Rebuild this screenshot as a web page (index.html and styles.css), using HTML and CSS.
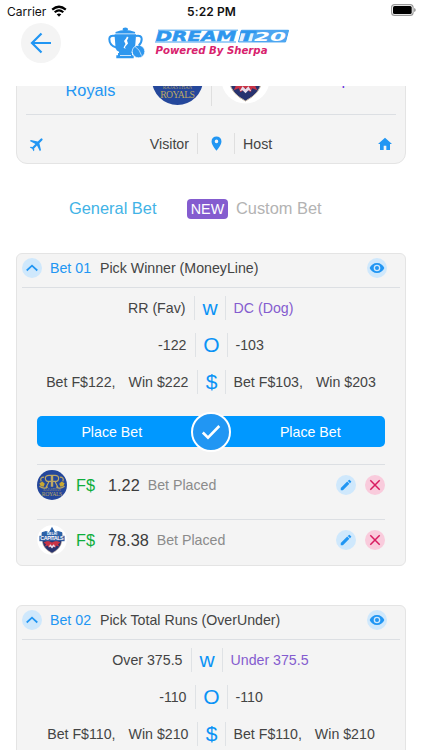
FILE: index.html
```
<!DOCTYPE html>
<html lang="en">
<head>
    <meta charset="UTF-8">
    <meta name="viewport" content="width=device-width, initial-scale=1.0">
    <title>Dream T20</title>
    <link rel="stylesheet" href="styles.css">
</head>
<body>
    <!-- Shared icons -->
    <svg class="sprite" width="0" height="0">
        <symbol id="up" viewBox="0 0 20 20">
            <path d="M4.700 12.500L10 7.700l5.300 4.800" fill="none" stroke="#2196f3" stroke-width="1.700"/>
        </symbol>
        <symbol id="eye" viewBox="0 0 24 24">
            <path d="M12 4.500C7 4.500 2.730 7.610 1 12c1.730 4.390 6 7.500 11 7.500s9.270-3.110 11-7.500c-1.730-4.390-6-7.500-11-7.500zM12 17a5 5 0 1 1 0-10 5 5 0 0 1 0 10zm0-8a3 3 0 1 0 0 6 3 3 0 0 0 0-6z" fill="#2196f3"/>
        </symbol>
        <symbol id="pencil" viewBox="0 0 24 24">
            <path d="M3 17.250V21h3.750L17.810 9.940l-3.750-3.750zM20.710 7.040a1 1 0 0 0 0-1.410l-2.340-2.340a1 1 0 0 0-1.410 0l-1.830 1.830 3.750 3.750z" fill="#2196f3"/>
        </symbol>
        <symbol id="cross" viewBox="0 0 12 12">
            <path d="M1.300 1.300l9.400 9.400M10.700 1.300L1.300 10.700" stroke="#d81b60" stroke-width="1.500"/>
        </symbol>
    </svg>

    <div class="phone">
        <header class="header">
            <div class="status">
                <span class="carrier">Carrier
                    <svg width="16" height="12" viewBox="0 0 16 12">
                        <g fill="none" stroke="#000" stroke-width="2.200">
                            <path d="M1.200 4.700Q8-1.200 14.800 4.700"/>
                            <path d="M3.700 7.300q4.300-3.800 8.600 0"/>
                        </g>
                        <path d="M5.700 9.300q2.300-1.800 4.600 0L8 11.700z"/>
                    </svg>
                </span>
                <span class="time">5:22 PM</span>
                <svg class="battery" width="25" height="12" viewBox="0 0 25 12">
                    <rect x=".6" y=".6" width="21.500" height="10.800" rx="3" fill="none" stroke="#999" stroke-width="1.100"/>
                    <rect x="2" y="2" width="18.700" height="8" rx="1.600"/>
                    <path d="M23.200 4v4q1.500-.5 1.500-2t-1.500-2z" fill="#888"/>
                </svg>
            </div>
            <div class="nav">
                <button class="back">
                    <svg width="22" height="22" viewBox="0 0 22 22">
                        <path d="M11.500 1.500L2 11l9.500 9.500M2 11h19" fill="none" stroke="#2196f3" stroke-width="2.200"/>
                    </svg>
                </button>
                <svg class="logo" width="184" height="34" viewBox="0 0 184 34">
                    <g fill="#2e97ee">
                        <ellipse cx="17.300" cy="2.200" rx="2.800" ry="1.700"/>
                        <path d="M7.500 5q9.800-4 19.600 0v1.500H7.500zM6.500 7.200h21.600l-1 13q-.5 3.500-3.500 4.500v2h-12.600v-2q-3-1-3.500-4.500zM10 26h14v2.200h1.700v3H8.300v-3H10z"/>
                        <circle cx="30.500" cy="24.500" r="6.300" stroke="#fff" stroke-width=".7"/>
                    </g>
                    <path d="M7 9Q1.300 8 1.300 12q0 6.500 7 8.500M28 9q5.700-1 5.700 3 0 4-3 6.500" fill="none" stroke="#2e97ee" stroke-width="2"/>
                    <path d="M19 9.500l1.500 1-1.500 3 1 3-3 3.500.5 2-2-1.500 2-3.500-1.500-3 2-2.500zM12 28h11v.8H12z" fill="#fff"/>
                    <path d="M27 19.500q5 3 6.500 9" fill="none" stroke="#fff" stroke-width=".6"/>
                    <path d="M47 15h81M50 3.200h80" stroke="#2e97ee" stroke-width=".9"/>
                    <text class="logo-name" x="47.500" y="14" textLength="81" lengthAdjust="spacingAndGlyphs">DREAM</text>
                    <path d="M133.500 3.300h47l-3 11.600h-47z" fill="#e4f2fd" stroke="#2e97ee"/>
                    <path d="M146.500 3.300h34l-3 11.600h-34z" fill="#4da6f1"/>
                    <text class="logo-name" x="131.500" y="14.300" textLength="15" lengthAdjust="spacingAndGlyphs">T</text>
                    <text class="logo-num" x="146" y="13.700" textLength="32" lengthAdjust="spacingAndGlyphs">20</text>
                    <text class="logo-tag" x="47.500" y="26.500" textLength="112" lengthAdjust="spacingAndGlyphs">Powered By Sherpa</text>
                </svg>
            </div>
        </header>

        <main class="content">
            <section class="match">
                <div class="teams">
                    <span class="team-left">Rajasthan<br>Royals</span>
                    <svg class="team-logo" viewBox="0 0 50 50"><use href="#rr"/></svg>
                    <i class="team-line"></i>
                    <svg class="team-logo small" viewBox="0 0 50 50"><use href="#dc"/></svg>
                    <span class="team-right">Delhi Capitals</span>
                </div>
                <div class="venue">
                    <svg class="plane" width="18" height="18" viewBox="0 0 24 24">
                        <path transform="rotate(45 12 12)" d="M21.500 16v-2l-8-5V3.500a1.500 1.500 0 0 0-3 0V9l-8 5v2l8-2.500V19l-2 1.500V22l3.500-1 3.500 1v-1.500L13.500 19v-5.500z" fill="#2196f3"/>
                    </svg>
                    <span class="visitor">Visitor</span>
                    <span class="pin">
                        <svg width="17" height="17" viewBox="0 0 24 24">
                            <path d="M12 2a7 7 0 0 0-7 7c0 5.250 7 13 7 13s7-7.750 7-13a7 7 0 0 0-7-7zm0 9.500a2.500 2.500 0 1 1 0-5 2.500 2.500 0 0 1 0 5z" fill="#2196f3"/>
                        </svg>
                    </span>
                    <span class="host">Host</span>
                    <svg width="16" height="16" viewBox="0 0 24 24">
                        <path d="M10 21v-6.500h4V21h5.500v-9h3L12 2.500 1.500 12h3v9z" fill="#2196f3"/>
                    </svg>
                </div>
            </section>

            <nav class="tabs">
                <a class="tab active">General Bet</a>
                <span class="new">NEW</span>
                <a class="tab">Custom Bet</a>
            </nav>

            <section class="bet">
                <div class="bet-head">
                    <span class="round"><svg width="20" height="20"><use href="#up"/></svg></span>
                    <span class="bet-no">Bet 01</span>
                    <span class="bet-title">Pick Winner (MoneyLine)</span>
                    <span class="round"><svg width="16" height="16"><use href="#eye"/></svg></span>
                </div>
                <div class="row row-winner">
                    <span class="left">RR (Fav)</span>
                    <span class="mid">w</span>
                    <span class="right dog">DC (Dog)</span>
                </div>
                <div class="row row-odds">
                    <span class="left">-122</span>
                    <span class="mid">O</span>
                    <span class="right">-103</span>
                </div>
                <div class="row row-money">
                    <span class="left"><span>Bet F$122,</span><span>Win $222</span></span>
                    <span class="mid">$</span>
                    <span class="right"><span>Bet F$103,</span><span>Win $203</span></span>
                </div>
                <div class="place">
                    <button>Place Bet</button>
                    <span class="check">
                        <svg width="20" height="16" viewBox="0 0 20 16">
                            <path d="M1.800 8.500L7 13.700 18.300 2" fill="none" stroke="#fff" stroke-width="2.600"/>
                        </svg>
                    </span>
                    <button>Place Bet</button>
                </div>
                <div class="placed">
                    <svg class="badge" viewBox="0 0 50 50">
                        <g id="rr">
                            <circle cx="25" cy="25" r="25" fill="#24479b"/>
                            <g fill="none" stroke="#bda865" stroke-width="2">
                                <path d="M24 8v20M24 9h-4q-6 0-6 5t6 5h4M20 19l-5 10M26 8v20M26 9h4q6 0 6 5t-6 5h-4M30 19l5 10"/>
                                <path d="M12 12q-8 0-5 7M38 12q8 0 5 7M4 27q8 6 14 1M46 27q-8 6-14 1"/>
                            </g>
                            <path d="M4 22l5-3 4 4-2 5-5-1zM46 22l-5-3-4 4 2 5 5-1z" fill="#c9a832"/>
                            <text class="rr-small" x="25" y="34.500" text-anchor="middle" textLength="29">RAJASTHAN</text>
                            <text class="rr-big" x="25" y="43.500" text-anchor="middle" textLength="34">ROYALS</text>
                        </g>
                    </svg>
                    <span class="cur">F$</span>
                    <span class="amount">1.22</span>
                    <span class="note">Bet Placed</span>
                    <span class="round"><svg width="14" height="14"><use href="#pencil"/></svg></span>
                    <span class="round red"><svg width="12" height="12"><use href="#cross"/></svg></span>
                </div>
                <div class="placed">
                    <svg class="badge" viewBox="0 0 50 50">
                        <g id="dc">
                            <circle cx="25" cy="25" r="24.500" fill="#fff"/>
                            <path d="M8 14h34l-1 14q-1 11-16 19Q10 39 9 28z" fill="#28336f" stroke="#c9b9a4"/>
                            <path d="M8 12l7-2 5 2 5-9 5 9 5-2 7 2v7H8z" fill="#2c62a8"/>
                            <path d="M11 29l7-3 7 3 7-3 7 3-4 3 2 4-5-2-2 4-5-4-5 4-2-4-5 2 2-4z" fill="#c93345"/>
                            <path d="M19 37l3-5 3 3 3-3 3 5-3-1-3 3-3-3z" fill="#e5dce9"/>
                            <rect x="4" y="18" width="42" height="9" fill="#315b9f"/>
                            <text class="dc-text" x="25" y="17" text-anchor="middle" textLength="17" font-size="5.500">DELHI</text>
                            <text class="dc-text" x="25" y="25.800" text-anchor="middle" textLength="39" font-size="9">CAPITALS</text>
                        </g>
                    </svg>
                    <span class="cur">F$</span>
                    <span class="amount">78.38</span>
                    <span class="note">Bet Placed</span>
                    <span class="round"><svg width="14" height="14"><use href="#pencil"/></svg></span>
                    <span class="round red"><svg width="12" height="12"><use href="#cross"/></svg></span>
                </div>
            </section>

            <section class="bet">
                <div class="bet-head">
                    <span class="round"><svg width="20" height="20"><use href="#up"/></svg></span>
                    <span class="bet-no">Bet 02</span>
                    <span class="bet-title">Pick Total Runs (OverUnder)</span>
                    <span class="round"><svg width="16" height="16"><use href="#eye"/></svg></span>
                </div>
                <div class="row row-runs">
                    <span class="left">Over 375.5</span>
                    <span class="mid">w</span>
                    <span class="right dog">Under 375.5</span>
                </div>
                <div class="row row-odds">
                    <span class="left">-110</span>
                    <span class="mid">O</span>
                    <span class="right">-110</span>
                </div>
                <div class="row row-money">
                    <span class="left"><span>Bet F$110,</span><span>Win $210</span></span>
                    <span class="mid">$</span>
                    <span class="right"><span>Bet F$110,</span><span>Win $210</span></span>
                </div>
            </section>
        </main>
    </div>
</body>
</html>
```
FILE: styles.css
```
* {
    box-sizing: border-box;
}
body {
    margin: 0;
    background-color: #fff;
    font-family: "Liberation Sans", Arial, sans-serif;
    font-size: 14.2px;
    color: #444;
}
svg {
    display: block;
    flex-shrink: 0;
}
button {
    border: none;
    padding: 0;
    font: inherit;
    cursor: pointer;
}
.sprite {
    position: absolute;
}
.phone {
    width: 422px;
    height: 750px;
    overflow: hidden;
    display: flex;
    flex-direction: column;
}

/* header */
.header {
    height: 86px;
    flex-shrink: 0;
}
.status {
    height: 22px;
    padding: 0 6px 0 7px;
    display: grid;
    grid-template-columns: 1fr auto 1fr;
    align-items: center;
    font-family: Inter, sans-serif;
    font-size: 12px;
    color: #111;
}
.carrier {
    display: flex;
    align-items: center;
    gap: 5px;
}
.time {
    font-weight: 600;
    letter-spacing: 0.1px;
}
.battery {
    justify-self: end;
    margin-top: -2px;
}
.nav {
    display: flex;
    align-items: flex-start;
    padding: 1px 0 0 21px;
}
.back {
    width: 40px;
    height: 40px;
    border-radius: 50%;
    background-color: #f4f4f4;
    display: flex;
    align-items: center;
    justify-content: center;
}
.logo {
    margin: 4px 0 0 47px;
}
.logo-name, .logo-num {
    font-family: "DejaVu Sans", sans-serif;
    font-size: 14.5px;
    font-weight: bold;
    font-style: italic;
    fill: #2e97ee;
    stroke: #2e97ee;
    stroke-width: 0.5px;
}
.logo-num {
    font-size: 13px;
    fill: #fff;
    stroke: none;
}
.logo-tag {
    font-family: "DejaVu Sans", sans-serif;
    font-size: 10.5px;
    font-weight: bold;
    font-style: italic;
    fill: #d8226d;
}

.content {
    flex: 1;
    min-height: 0;
    overflow: hidden;
    padding: 0 16px;
}
.match {
    margin-top: -42px;
    height: 120px;
    padding: 0 9px;
    background-color: #f4f4f4;
    border: 1px solid #e4e4e4;
    border-radius: 11px;
}
.teams {
    height: 70px;
    display: flex;
    align-items: center;
    border-bottom: 1px solid #dcdfe3;
    font-size: 16.3px;
    line-height: 21px;
}
.team-left {
    width: 126px;
    padding-left: 3px;
    text-align: center;
    color: #2196f3;
}
.team-right {
    margin-left: 9px;
    color: #6a35e0;
    white-space: nowrap;
}
.team-logo {
    width: 51px;
    height: 51px;
}
.team-logo.small {
    width: 49px;
    height: 49px;
}
.team-line {
    width: 1px;
    height: 52px;
    margin: 0 9px 0 8px;
    background-color: #dfdfdf;
}
.venue {
    height: 57px;
    padding: 0 3px 0 2px;
    display: flex;
    align-items: center;
}
.visitor {
    flex: 1;
    text-align: right;
}
.pin {
    width: 38px;
    height: 21px;
    margin: 0 8px;
    display: flex;
    align-items: center;
    justify-content: center;
    border: solid #dfdfdf;
    border-width: 0 1px;
}
.host {
    width: 134px;
}

/* tabs */
.tabs {
    height: 89px;
    display: flex;
    align-items: center;
    padding-left: 53px;
    font-size: 16.4px;
}
.tab {
    color: #b3b3b3;
}
.tab.active {
    color: #42b3e6;
}
.new {
    width: 41px;
    height: 20px;
    margin: 0 8px 0 30.5px;
    border-radius: 4px;
    background-color: #845ccf;
    color: #fff;
    font-size: 14.3px;
    line-height: 20px;
    text-align: center;
}

/* bets */
.bet {
    height: 313px;
    margin-bottom: 39px;
    background-color: #f4f4f4;
    border: 1px solid #e4e4e4;
    border-radius: 6px;
}
.bet-head {
    height: 34px;
    margin: 0 5px;
    padding: 0 13px 5px 0;
    display: flex;
    align-items: center;
    border-bottom: 1px solid #dcdfe3;
}
.bet-no {
    width: 50px;
    margin-left: 8px;
    color: #2196f3;
}
.bet-title {
    flex: 1;
}
.round {
    width: 20px;
    height: 20px;
    border-radius: 50%;
    background-color: #cfe8fc;
    display: flex;
    align-items: center;
    justify-content: center;
}
.round.red {
    margin-left: 9px;
    background-color: #f9cbdc;
}
.row {
    height: 24px;
    margin-top: 13.2px;
    display: grid;
    line-height: 24px;
}
.bet-head + .row {
    margin-top: 8px;
}
.row-winner {
    grid-template-columns: 177px 32px 1fr;
}
.row-odds {
    grid-template-columns: 178px 33px 1fr;
}
.row-money {
    grid-template-columns: 180px 29px 1fr;
}
.row-runs {
    grid-template-columns: 174px 32px 1fr;
}
.left, .right {
    display: flex;
    gap: 13px;
}
.left {
    justify-content: flex-end;
    padding-right: 8.5px;
}
.right {
    padding-left: 7.5px;
}
.dog {
    color: #845ccf;
}
.mid {
    border: solid #dfe2e5;
    border-width: 0 1px;
    color: #0b93f6;
    font-size: 21px;
    text-align: center;
}
.place {
    height: 31px;
    margin: 22px 20px 17px;
    display: flex;
    align-items: center;
    border-radius: 5px;
    background-color: #0098ff;
}
.place button {
    flex: 1;
    height: 31px;
    padding-right: 4px;
    background: none;
    color: #fff;
}
.place .check + button {
    padding: 0 0 0 5px;
}
.check {
    width: 40px;
    height: 40px;
    flex-shrink: 0;
    border: 2px solid #fff;
    border-radius: 50%;
    background-color: #2196f3;
    display: flex;
    align-items: center;
    justify-content: center;
}
.placed {
    height: 54.5px;
    margin: 0 20px;
    padding: 5px 0 0;
    display: flex;
    align-items: flex-start;
    line-height: 30px;
    border-top: 1px solid #dcdfe3;
}
.badge {
    width: 30px;
    height: 30px;
}
.rr-small, .rr-big {
    font-family: "Liberation Serif", serif;
    font-size: 5px;
    fill: #a79a72;
}
.rr-big {
    font-size: 9.5px;
    fill: #bda865;
}
.dc-text {
    font-weight: bold;
    fill: #fff;
}
.cur {
    width: 32px;
    margin-left: 9px;
    font-size: 16.3px;
    color: #0eae3c;
}
.amount {
    font-size: 16.3px;
    color: #3c3c3c;
}
.note {
    flex: 1;
    margin-left: 8px;
    color: #8b8b8b;
}
.placed .round {
    margin-top: 5px;
}
```
